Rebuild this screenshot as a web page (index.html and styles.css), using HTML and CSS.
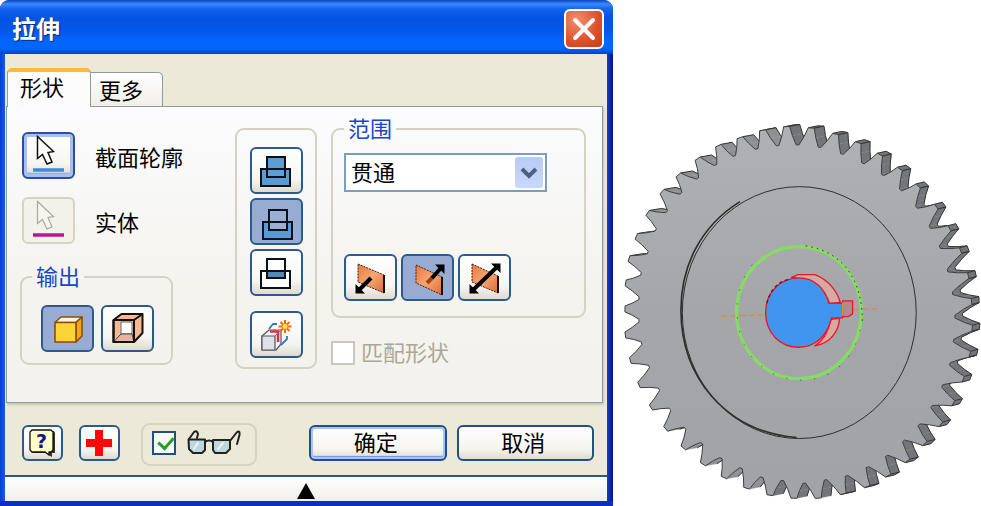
FILE: index.html
```html
<!DOCTYPE html>
<html lang="zh-CN">

  <head>
    <meta charset="utf-8">
    <title>拉伸</title>
    <link rel="stylesheet" href="styles.css">
  </head>

  <body>
    <div class="page">
      <form class="dialog" onsubmit="return false">
        <div class="titlebar">
          <h1>拉伸</h1>
          <button type="button" class="close" aria-label="关闭">
            <svg viewBox="0 0 36 36"><path d="M9 9L27 27M27 9L9 27" stroke="#fff" stroke-width="4" stroke-linecap="round"/></svg>
          </button>
        </div>

        <div class="body">
          <div class="tabs">
            <button type="button" class="tab active">形状</button>
            <button type="button" class="tab">更多</button>
          </div>

          <div class="panel">
            <div class="col-left">
              <div class="pick">
                <button type="button" class="tool focus" id="profile">
                  <svg viewBox="2 2 49 43">
                    <path d="M15.500 4.500V26.500L20.500 22.500L25 32L30 30L26 20.500L31.500 19.500Z" fill="#fff" stroke="#111" stroke-width="1.500"/>
                    <path d="M11 38H42" stroke="#368de0" stroke-width="3.500"/>
                  </svg>
                </button>
                <label for="profile">截面轮廓</label>
              </div>
              <div class="pick">
                <button type="button" class="tool off" id="solid" disabled>
                  <svg viewBox="2 2 49 43">
                    <path d="M15.500 4.500V26.500L20.500 22.500L25 32L30 30L26 20.500L31.500 19.500Z" fill="#f6f5ee" stroke="#a9a9a2" stroke-width="1.200"/>
                    <path d="M11 38H42" stroke="#c0138c" stroke-width="3.500"/>
                  </svg>
                </button>
                <label for="solid">实体</label>
              </div>
              <fieldset class="group output">
                <legend>输出</legend>
                <div class="row">
                  <button type="button" class="tool on" aria-label="实体输出">
                    <svg viewBox="2 2 49 43" stroke="#8f4a10" stroke-width="1.600" stroke-linejoin="round">
                      <path d="M14 17.500L20 12H41L35 17.500Z" fill="#fff6e2"/>
                      <path d="M35 17.500L41 12V31L35 37Z" fill="#f0a818"/>
                      <path d="M14 17.500H35V37H14Z" fill="#fdd435"/>
                    </svg>
                  </button>
                  <button type="button" class="tool" aria-label="曲面输出">
                    <svg viewBox="2 2 49 43" stroke="#111" stroke-width="2" stroke-linejoin="round">
                      <path d="M12.500 15L20.500 9H41.500V28L33 37H12.500Z" fill="#f5b892"/>
                      <path d="M20 17H31V29H20Z" fill="#fff" stroke="#666" stroke-width="1"/>
                      <path d="M12.500 37L20 29H31L33 37Z" fill="#eeb2a2" stroke="#444" stroke-width="1"/>
                      <path d="M12.500 15H33V37M33 15L41.500 9M12.500 15V37H33" fill="none"/>
                    </svg>
                  </button>
                </div>
              </fieldset>
            </div>

            <div class="ops">
              <button type="button" class="tool" aria-label="求并">
                <svg viewBox="2 2 49 43" stroke="#08111c" stroke-width="2">
                  <path d="M11 22H40V39H11Z" fill="#589bd5"/>
                  <path d="M17 10H35V30H17Z" fill="#5c9dd6"/>
                  <path d="M11 22H40" fill="none"/>
                </svg>
              </button>
              <button type="button" class="tool on" aria-label="求差">
                <svg viewBox="2 2 49 43" stroke="#08111c" stroke-width="2">
                  <path d="M13 24H42V41H13Z" fill="#5a9bd4"/>
                  <path d="M19 12H37V32H19Z" fill="#9bafd3"/>
                  <path d="M13 24H42" fill="none"/>
                </svg>
              </button>
              <button type="button" class="tool" aria-label="求交">
                <svg viewBox="2 2 49 43" stroke="#08111c" stroke-width="2">
                  <path d="M11 22H40V39H11Z" fill="#fff"/>
                  <path d="M17 10H35V29H17Z" fill="#fff"/>
                  <path d="M17 22H35V29H17Z" fill="#5686b4"/>
                </svg>
              </button>
              <button type="button" class="tool new-solid" aria-label="新建实体">
                <svg viewBox="2 2 49 43" fill="none" stroke-linejoin="round">
                  <path d="M12 25L19 19H31V33L26 39H12Z" fill="#f4f4f8" stroke="#555" stroke-width="1.200"/>
                  <path d="M12 25H25V39H12Z" fill="#dfe0ec" stroke="#555" stroke-width="1.200"/>
                  <path d="M25 25L31 19" stroke="#777"/>
                  <path d="M20 20.500H28V31" stroke="#e02c48" stroke-width="2.500"/>
                  <path d="M19 18L23 13H27M37 25V28L31 34" stroke="#3979b8" stroke-width="1.800"/>
                  <path d="M35 9V22M28.500 15.500H41.500M30.500 11L39.500 20M39.500 11L30.500 20" stroke="#ed6a10" stroke-width="2"/>
                  <circle cx="35" cy="15.500" r="3" fill="#ffe05c" stroke="#f07c14"/>
                </svg>
              </button>
            </div>

            <div class="col-right">
              <fieldset class="group extents">
                <legend>范围</legend>
                <div class="select">
                  <select aria-label="范围">
                    <option>贯通</option>
                    <option>距离</option>
                  </select>
                  <span class="arrow"><svg viewBox="0 0 28 32"><path d="M7 12L14 19L21 12" fill="none" stroke="#4a6185" stroke-width="4"/></svg></span>
                </div>
                <div class="row">
                  <button type="button" class="tool" aria-label="方向一">
                    <svg viewBox="2 2 49 43">
                      <path d="M14 10L40 21V39L14 28Z" fill="url(#plane)" stroke="#3b2418" stroke-dasharray="2 1"/>
                      <path d="M40 21V39" stroke="#111" stroke-width="2"/>
                      <path d="M27 24L15 36" stroke="#000" stroke-width="4"/>
                      <path d="M11.500 39.500V30L21 39.500Z"/>
                    </svg>
                  </button>
                  <button type="button" class="tool on" aria-label="方向二">
                    <svg viewBox="2 2 49 43">
                      <path d="M15 11L41 23V41L15 29Z" fill="url(#plane)" stroke="#3b2418" stroke-dasharray="2 1"/>
                      <path d="M41 23V41" stroke="#111" stroke-width="2"/>
                      <path d="M26 29L33 22" stroke="#9c4515" stroke-width="4"/>
                      <path d="M31 24L40 14" stroke="#000" stroke-width="4"/>
                      <path d="M43.500 10.500V20L34 10.500Z"/>
                    </svg>
                  </button>
                  <button type="button" class="tool" aria-label="对称">
                    <svg viewBox="2 2 49 43">
                      <path d="M14 10L40 22V39L14 28Z" fill="url(#plane)" stroke="#3b2418" stroke-dasharray="2 1"/>
                      <path d="M40 22V39" stroke="#111" stroke-width="2"/>
                      <path d="M15 36L39 13" stroke="#000" stroke-width="4"/>
                      <path d="M11.500 39.500V30L21 39.500ZM42.500 9.500V19L33 9.500Z"/>
                    </svg>
                  </button>
                </div>
              </fieldset>
              <label class="match"><input type="checkbox" class="check" disabled><span>匹配形状</span></label>
            </div>
          </div>

          <div class="footer">
            <button type="button" class="tool small" aria-label="帮助">
              <svg viewBox="2 2 37 32">
                <path d="M11 6H32L33 8V28H30V32L24 28H11L9 26V8Z" fill="#333"/>
                <path d="M10 5H29L31 7V25L29 27H27V30L23 27H10L8 25V7Z" fill="#ffffc8" stroke="#111" stroke-width="1.300"/>
                <text x="19.500" y="23" class="qmark">?</text>
              </svg>
            </button>
            <button type="button" class="tool small" aria-label="添加">
              <svg viewBox="2 2 37 32"><path d="M16 5H24V14H33V22H24V31H16V22H7V14H16Z" fill="#f80a0a"/></svg>
            </button>
            <label class="preview">
              <input type="checkbox" class="check" checked aria-label="预览">
              <svg viewBox="0 0 54 26" fill="none" stroke="#222" stroke-width="2" stroke-linecap="round" stroke-linejoin="round">
                <path d="M1.500 9.500H18V20L15 23H6L2 19Z" fill="#bcd8dc"/>
                <path d="M26 10H43V19L39 23H28L26 20Z" fill="#bcd8dc"/>
                <path d="M18 12Q22 9 26 12M2 9L7 2Q10 0 11 4L10 8M43 11L50 2Q53 0 52.500 5L50 14"/>
                <path d="M7 19L11 13M31 19L36 13" stroke="#e9f6f6"/>
              </svg>
            </label>
            <button type="submit" class="push default">确定</button>
            <button type="button" class="push">取消</button>
          </div>
        </div>

        <button type="button" class="collapse" aria-label="收起">
          <svg viewBox="0 0 20 18"><path d="M10 1L19 17H1Z"/></svg>
        </button>
      </form>

      <div class="model">
        <svg id="gear" viewBox="0 0 1098 1188">
          <defs>
            <linearGradient id="face" x1="0" y1="0" x2="0" y2="1">
              <stop offset="0" stop-color="#b0b1b4"/>
              <stop offset="0.500" stop-color="#a5a6aa"/>
              <stop offset="1" stop-color="#a2a3a7"/>
            </linearGradient>
            <linearGradient id="plane" x1="0" y1="0" x2="1" y2="1">
              <stop offset="0" stop-color="#e9783c"/>
              <stop offset="0.500" stop-color="#f6a774"/>
              <stop offset="1" stop-color="#dc6a30"/>
            </linearGradient>
          </defs>
          <g id="sides" stroke-linejoin="round"></g>
          <path id="front" fill="url(#face)" stroke="#3c3c3c" stroke-width="3" stroke-linejoin="round"/>
          <!-- hub -->
          <g fill="none" stroke="#2e2e2e" stroke-width="3">
            <ellipse cx="553" cy="608" rx="351" ry="378"/>
            <path d="M375 275C255 350 198 470 198 600C198 800 330 965 545 983" stroke-width="5"/>
          </g>
          <path d="M320 619L452 615M715 599L790 597" stroke="#e08a3c" stroke-width="4" stroke-dasharray="18 9"/>
          <ellipse cx="552" cy="608" rx="187" ry="198" fill="none" stroke="#86db62" stroke-width="10"/>
          <path d="M572 408C690 425 745 520 742 640" fill="none" stroke="#285022" stroke-width="3" stroke-dasharray="5 12"/>
          <path d="M735 660C715 760 640 810 560 811C480 808 420 770 385 700C355 620 355 520 430 443" fill="none" stroke="#3f7a30" stroke-width="3" stroke-dasharray="4 38"/>
          <!-- bore and keyway -->
          <g stroke="#ea1822" stroke-width="4" stroke-linejoin="round">
            <path d="M530 502L550 494H600C645 512 668 548 676 577L645 582C630 540 595 510 530 502Z" fill="#d5a9a4"/>
            <path d="M600 708C650 700 672 660 674 625L648 628C640 668 625 692 600 708Z" fill="#dca8a0"/>
            <path d="M683 573H713V612L700 620H685Z" fill="#ad8c8e"/>
            <path d="M642 580H683V624H650C636 680 600 712 552 712C494 712 452 668 452 608C452 548 496 504 552 504C598 504 630 535 642 580Z" fill="#4096ee"/>
          </g>
          <path d="M456 580C464 543 488 514 524 508" fill="none" stroke="#5a1c30" stroke-width="4" stroke-dasharray="10 8"/>
          <path d="M684 578V618" stroke="#e8d840" stroke-width="3"/>
        </svg>
      </div>
    </div>
    <script src="gear.js"></script>
  </body>

</html>
```

FILE: styles.css
```css
* { box-sizing: border-box; }
body {
  margin: 0;
  background: #fff;
  color: #000;
  font: 22px/28px "Noto Sans CJK SC", sans-serif;
}
button, select, input { font: inherit; color: inherit; margin: 0; }
button { padding: 0; }
svg { display: block; }

.page {
  display: grid;
  grid-template-columns: 5fr 3fr;
}

/* window */
.dialog {
  display: flex;
  flex-direction: column;
  background: linear-gradient(to right, #0a3bd8, #1c5ae6 5px, #1c5ae6 50%, #1440c8 99%, #04148c);
  box-shadow: inset 0 -5px 0 #0c2fc0;
  border-radius: 9px 9px 0 0;
  padding: 0 6px 5px 5px;
}
.titlebar {
  display: flex;
  align-items: center;
  justify-content: space-between;
  height: 54px;
  margin: 0 -6px 0 -5px;
  padding: 4px 9px 0 12px;
  border-radius: 9px 9px 0 0;
  background: linear-gradient(#0a44bc, #3a8cff 4px, #1463ee 9px, #0453e2 18px, #0456e8 30px, #0266ff 42px, #0164fa 49px, #0340c4 54px);
}
h1 {
  margin: 0;
  padding-bottom: 2px;
  font-size: 24px;
  line-height: 28px;
  font-weight: bold;
  color: #fff;
  text-shadow: 1px 1px 1px #0a2a80;
}
.close {
  width: 40px;
  height: 40px;
  border: 2px solid #fff;
  border-radius: 6px;
  background: radial-gradient(circle at 30% 25%, #ef8f70, #dd4f2a 60%, #c43c14);
}
.body {
  background: #ece9d8;
  padding: 14px 4px 0 1px;
}

/* tabs */
.tabs {
  display: flex;
  align-items: flex-end;
  padding-left: 1px;
}
.tab {
  width: 72px;
  height: 34px;
  border: 1px solid #919b9c;
  border-bottom: 0;
  border-left: 0;
  border-radius: 0 5px 0 0;
  background: linear-gradient(#fff, #efeee6);
  text-align: left;
  padding: 0 0 2px 8px;
}
.tab.active {
  position: relative;
  width: 84px;
  height: 39px;
  margin-bottom: -1px;
  padding: 0 0 8px 12px;
  border: 1px solid #919b9c;
  border-top: 4px solid #fbb93c;
  border-bottom: 0;
  border-radius: 5px 5px 0 0;
  background: #fcfcfc;
}
.panel {
  display: grid;
  grid-template-columns: 201fr 82px 255fr;
  column-gap: 14px;
  padding: 11px 16px 33px 13px;
  border: 1px solid #919b9c;
  background: linear-gradient(#fcfcfe, #f4f3ee 60%, #f3f2ec);
  box-shadow: 1px 2px 2px #c9c5b2;
}

/* buttons */
.tool {
  flex: none;
  width: 53px;
  height: 47px;
  border: 2px solid #2b5a8c;
  border-radius: 6px;
  background: linear-gradient(#fff, #f6f5f0 70%, #dedace);
}
.tool.on { background: #98acd3; }
.tool.off { border-color: #d6d3c2; background: #f3f2e9; }
.tool.focus {
  border-color: #2a4f9a;
  box-shadow: inset 0 0 0 3px #a6c0f3, inset 0 -4px 2px #7d9fe0;
}
.tool.small { width: 41px; height: 36px; }
.push {
  flex: 1;
  height: 36px;
  padding: 0 4px 4px 0;
  border: 2px solid #20508a;
  border-radius: 6px;
  background: linear-gradient(#fff, #f5f4ee 70%, #dfdbcf);
}
.push.default { box-shadow: inset 0 0 0 2px #a8c4f6, inset 0 -3px 1px #6f94e0; }

.row { display: flex; gap: 4px; }
.col-left { padding: 14px 48px 0 0; }
.pick {
  display: flex;
  align-items: center;
  gap: 20px;
  height: 47px;
  margin: 0 -40px 18px 2px;
}

.group {
  min-width: 0;
  margin: 0;
  border: 2px solid #d4d2c4;
  border-radius: 9px;
}
legend {
  height: 22px;
  line-height: 18px;
  padding: 0 4px;
  color: #1a45c8;
}
.output { margin-top: 22px; padding: 17px 16px 11px 10px; }
.output .row { gap: 7px; padding-left: 9px; }
.ops {
  display: flex;
  flex-direction: column;
  align-items: center;
  align-self: start;
  gap: 4px;
  margin-top: 10px;
  padding: 17px 0 9px;
  border: 2px solid #d4d2c4;
  border-radius: 9px;
}
.new-solid { margin-top: 11px; }
.extents { padding: 13px 11px 15px; }
.extents .row { margin-top: 62px; }

.select {
  position: relative;
  width: 203px;
  height: 39px;
}
.select select {
  width: 100%;
  height: 100%;
  padding: 0 36px 4px 5px;
  border: 2px solid #7f9db9;
  border-radius: 0;
  background: #fff;
  appearance: none;
}
.arrow {
  position: absolute;
  top: 4px;
  right: 4px;
  width: 28px;
  height: 31px;
  border-radius: 3px;
  background: linear-gradient(#b9cbf3, #c8d8fb);
  pointer-events: none;
}

.check {
  flex: none;
  width: 24px;
  height: 24px;
  border: 2px solid #1c5180;
  background: #f8f8f4;
  appearance: none;
}
.check:checked::after {
  content: "";
  display: block;
  width: 7px;
  height: 12px;
  margin: 1px 0 0 7px;
  border: solid #21a121;
  border-width: 0 3px 3px 0;
  transform: rotate(42deg);
}
.check:disabled { border-color: #cac8bb; background: #fff; }
.match {
  display: flex;
  align-items: center;
  gap: 6px;
  height: 24px;
  margin-top: 23px;
  color: #aca899;
}
.match span { padding-bottom: 4px; }

/* bottom */
.footer {
  display: flex;
  align-items: center;
  height: 72px;
  padding: 7px 9px 0 16px;
}
.footer .small { margin-right: 16px; }
.preview {
  display: flex;
  align-items: center;
  gap: 11px;
  width: 116px;
  height: 43px;
  margin: 4px 52px 0 5px;
  padding: 0 0 4px 9px;
  border: 2px solid #d8d3bf;
  border-radius: 9px;
}
.preview svg { width: 54px; height: 26px; }
.push + .push { margin-left: 10px; }
.qmark {
  font: bold 19px "DejaVu Sans", sans-serif;
  text-anchor: middle;
  fill: #16128c;
}
.collapse {
  display: flex;
  justify-content: center;
  align-items: center;
  height: 26px;
  padding-top: 3px;
  border: 0;
  border-top: 2px solid #2b5a78;
  background: linear-gradient(#fff, #f0efe8);
}
.collapse svg { width: 20px; height: 18px; }

.model {
  display: flex;
  align-items: flex-end;
  padding-left: 2px;
}
.model svg { width: 100%; }
```

FILE: gear.js
```js
// tooth tips and the valley after each, clockwise from the top
var tips = [
  [515, 50], [589, 54], [662, 72], [730, 98], [795, 134], [855, 177], [910, 228],
  [964, 290], [1004, 355], [1037, 422], [1060, 497], [1070, 575], [1072, 655],
  [1065, 733], [1045, 808], [1015, 880], [978, 943], [930, 1001], [878, 1053],
  [820, 1097], [757, 1130], [685, 1152], [610, 1165], [537, 1165], [465, 1156],
  [395, 1135], [327, 1103], [264, 1063], [205, 1014], [152, 957], [108, 893],
  [72, 825], [46, 752], [31, 675], [30, 597], [32, 519], [42, 446], [64, 379],
  [98, 309], [141, 245], [190, 195], [248, 146], [310, 107], [375, 83], [443, 61]
];
var valleys = [
  [548, 105], [614, 112], [681, 132], [744, 160], [803, 195], [857, 240], [905, 292],
  [945, 352], [975, 412], [998, 482], [1013, 550], [1020, 620], [1016, 692],
  [1005, 762], [982, 828], [950, 890], [912, 945], [866, 993], [815, 1038],
  [757, 1072], [695, 1098], [632, 1110], [568, 1120], [502, 1112], [440, 1102],
  [378, 1075], [318, 1045], [260, 1000], [210, 955], [165, 898], [132, 838],
  [102, 770], [80, 700], [72, 632], [72, 565], [78, 492], [98, 428], [122, 360],
  [155, 305], [198, 250], [248, 205], [302, 165], [358, 138], [425, 117], [488, 107]
];

var points = [];

// adds a point moved by t along the rim at p
function add(p, t, x, y) {
  var dx = p[0] - 550, dy = p[1] - 608, r = Math.hypot(dx, dy);
  points.push([x - dy / r * t, y + dx / r * t]);
}

for (var i = 0; i < tips.length; i++) {
  var tip = tips[i];
  var before = valleys[(i + valleys.length - 1) % valleys.length];
  var after = valleys[i];
  add(before, 4, before[0], before[1]);
  add(tip, -1, (tip[0] + before[0]) / 2, (tip[1] + before[1]) / 2);
  add(tip, -9, tip[0], tip[1]);
  add(tip, 9, tip[0], tip[1]);
  add(tip, 1, (tip[0] + after[0]) / 2, (tip[1] + after[1]) / 2);
  add(after, -4, after[0], after[1]);
}

function back(p) {
  return [p[0] + 30 - (p[0] - 550) * 0.015, p[1] - 6];
}

var sides = "";
for (var j = 0; j < points.length; j++) {
  var a = points[j], b = points[(j + 1) % points.length];
  // only the faces turned to the viewer
  var facing = (b[1] - a[1]) * 30 + (b[0] - a[0]) * 6;
  if (facing <= 0) continue;
  var shade = a[0] > 480 ? "#747578" : "#8f9094";
  sides += '<polygon fill="' + shade + '" stroke="' + shade + '" stroke-width="1" points="' + [a, b, back(b), back(a)].join(" ") + '"/>';
  // back rim, and the crease where the flank meets the tip
  sides += '<path fill="none" stroke="#333" stroke-width="3" d="M' + back(a) + "L" + back(b) + '"/>';
  if (j % 6 == 3) {
    sides += '<path stroke="#333" stroke-width="3" d="M' + a + "L" + back(a) + '"/>';
  }
  if (j % 6 == 2) {
    sides += '<path stroke="#333" stroke-width="3" d="M' + a + "L" + back(a) + "M" + b + "L" + back(b) + '"/>';
  }
}
document.getElementById("sides").innerHTML = sides;
document.getElementById("front").setAttribute("d", "M" + points.join("L") + "Z");
```
